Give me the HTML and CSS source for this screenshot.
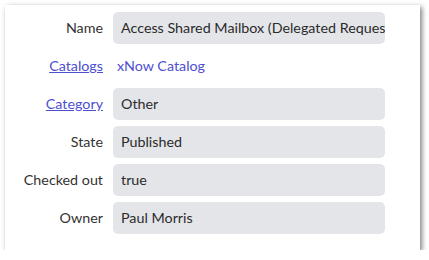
FILE: index.html
```html
<!DOCTYPE html>
<html>
<head>
<meta charset="utf-8">
<link rel="stylesheet" href="styles.css">
</head>
<body>
<div class="card">
  <div class="form">
    <div class="label">Name</div>
    <div class="value box">Access Shared Mailbox (Delegated Request)</div>

    <div class="label"><a class="link" href="#">Catalogs</a></div>
    <div class="value plain"><a class="link nounder" href="#">xNow Catalog</a></div>

    <div class="label"><a class="link" href="#">Category</a></div>
    <div class="value box">Other</div>

    <div class="label">State</div>
    <div class="value box">Published</div>

    <div class="label">Checked out</div>
    <div class="value box">true</div>

    <div class="label">Owner</div>
    <div class="value box">Paul Morris</div>
  </div>
</div>
</body>
</html>
```

FILE: styles.css
```css
html, body {
  margin: 0;
  padding: 0;
  background: #ffffff;
}
body {
  padding: 5px 0 0 5px;
  font-family: Lato, "Liberation Sans", sans-serif;
  font-size: 14.3px;
  color: #2b2b2b;
}
.card {
  width: 415px;
  height: 245px;
  box-sizing: border-box;
  background: #ffffff;
  box-shadow: 2px 2px 5px rgba(0, 0, 0, 0.5);
  padding: 7px 35px 0 0;
}
.form {
  display: grid;
  grid-template-columns: 98px 272px;
  grid-auto-rows: 32px;
  column-gap: 10px;
  row-gap: 6px;
}
.label {
  text-align: right;
  line-height: 32px;
  color: #333333;
  white-space: nowrap;
}
.value {
  line-height: 32px;
  white-space: nowrap;
  overflow: hidden;
}
.box {
  background: #e4e5e9;
  border-radius: 5px;
  padding: 0 8px;
}
.plain {
  padding: 0 4px;
}
.link {
  color: #4d4fd0;
  text-decoration: underline;
}
.nounder {
  text-decoration: none;
}
```
